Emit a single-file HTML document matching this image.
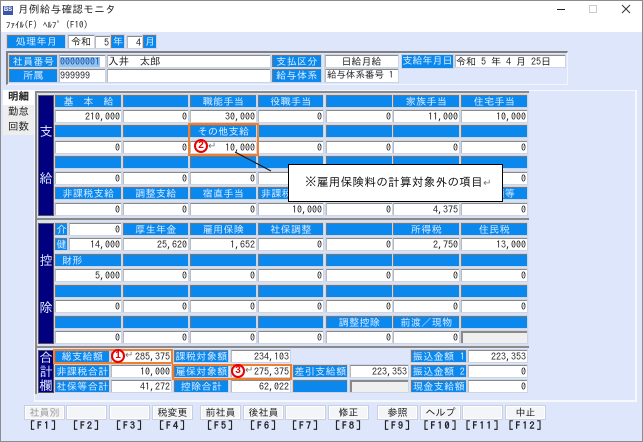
<!DOCTYPE html>
<html lang="ja"><head><meta charset="utf-8"><title>月例給与確認モニタ</title>
<style>
html,body{margin:0;padding:0}
body{width:643px;height:442px;position:relative;overflow:hidden;background:#dde6fa;font-family:"Liberation Sans","IPAGothic","Noto Sans CJK JP",sans-serif;font-size:10px;color:#222;filter:blur(.3px)}
div{position:absolute;box-sizing:border-box;white-space:nowrap}
.j{font-family:"IPAGothic","Noto Sans CJK JP",sans-serif}
.h,.l{background:#0a88ee;color:#dcebff;text-align:center;font-family:"IPAGothic","Noto Sans CJK JP",sans-serif;font-size:10px;line-height:12px;letter-spacing:.4px;border-top:1px solid #777;border-left:1px solid #777;box-shadow:0 0 0 1px #cdd4e4}
.v,.t{background:#fff;color:#222;text-align:right;font-family:"IPAGothic","Noto Sans CJK JP",sans-serif;font-size:10px;line-height:12px;padding-right:1px;border-top:1px solid #8a8a8a;border-left:1px solid #bbb;box-shadow:0 0 0 1px #cdd4e4}
.c1{left:55px;width:66px}.c2{left:123px;width:65px}.c3{left:190px;width:66px}.c4{left:258px;width:65px}.c5{left:326px;width:66px}.c6{left:393px;width:66px}.c7{left:461px;width:66px}
.a1{top:95px;height:12px}.b1{top:110px;height:12px}
.a2{top:125px;height:12px}.b2{top:141px;height:12px}
.a3{top:156px;height:12px}.b3{top:172px;height:12px}
.a4{top:187px;height:12px}.b4{top:203px;height:12px}
.a5{top:223px;height:12px}.b5{top:238px;height:12px}
.a6{top:254px;height:12px}.b6{top:269px;height:12px}
.a7{top:285px;height:12px}.b7{top:300px;height:12px}
.a8{top:316px;height:12px}.b8{top:331px;height:12px}
.bar{background:#000080;color:#dfe8ff;font-family:"IPAGothic","Noto Sans CJK JP",sans-serif;font-size:13px;text-align:center;left:38px;width:16px;border:1px solid #555}
.btn{top:405px;height:15px;width:41px;background:#f4f5f8;border:1px solid #c9cfdc;box-shadow:inset 0 0 0 1px #fff;text-align:center;font-family:"IPAGothic","Noto Sans CJK JP",sans-serif;font-size:10px;line-height:14px;color:#222}
.fk{top:420px;width:44px;text-align:center;font-family:"IPAGothic","Noto Sans CJK JP",sans-serif;font-size:10px;line-height:12px;letter-spacing:2px;color:#222;font-weight:bold}
.box{border:2px solid #f08030;background:transparent}
.cir{width:14px;height:14px;border-radius:50%;border:2px solid #e80000;background:#fff;color:#e80000;font:bold 10px/10px "Liberation Sans",sans-serif;text-align:center}
.ret{color:#777;font-family:"DejaVu Sans",sans-serif;font-size:10px;line-height:12px;background:transparent}
.tab{left:3px;width:31px;height:15px;font-family:"IPAGothic","Noto Sans CJK JP",sans-serif;font-size:10.5px;line-height:14px;text-align:center;background:#eeeeee}
</style></head><body>

<!-- window chrome -->
<div style="left:0;top:0;width:643px;height:442px;border:1px solid #8c8c8c;z-index:50"></div>
<div style="left:1px;top:1px;width:641px;height:31px;background:#fff"></div>
<div style="left:3px;top:6px;width:10px;height:9px;background:#3b55a8;color:#fff;font:bold 6px/9px 'Liberation Sans',sans-serif;text-align:center">BS</div>
<div class="j" style="left:18px;top:3px;font-size:10.5px;line-height:14px;letter-spacing:.4px;color:#222">月例給与確認モニタ</div>
<div class="j" style="left:6px;top:20px;font-size:9px;line-height:12px;color:#222">ﾌｧｲﾙ(F)</div>
<div class="j" style="left:43px;top:20px;font-size:9px;line-height:12px;color:#222">ﾍﾙﾌﾟ (F10)</div>
<div style="left:557px;top:9px;width:8px;height:1px;background:#222"></div>
<div style="left:589px;top:5px;width:8px;height:8px;border:1px solid #ccc"></div>
<svg style="position:absolute;left:621px;top:4px" width="10" height="10"><path d="M1 1L9 9M9 1L1 9" stroke="#333" stroke-width="1" fill="none"/></svg>

<!-- year month -->
<div class="l" style="left:7px;top:35px;width:58px;height:13px">処理年月</div>
<div class="t" style="left:68px;top:35px;width:26px;height:13px;text-align:center">令和</div>
<div class="t" style="left:95px;top:36px;width:15px;height:12px">5</div>
<div class="l" style="left:111px;top:35px;width:13px;height:13px;letter-spacing:0">年</div>
<div class="t" style="left:127px;top:36px;width:15px;height:12px">4</div>
<div class="l" style="left:143px;top:35px;width:13px;height:13px;letter-spacing:0">月</div>

<!-- employee panel -->
<div style="left:6px;top:51px;width:562px;height:34px;border-top:2px solid #808080;border-left:2px solid #808080;border-bottom:1px solid #f2f5fc;border-right:1px solid #f2f5fc"></div>
<div class="l" style="left:9px;top:55px;width:48px;height:12px">社員番号</div>
<div class="t" style="left:59px;top:55px;width:46px;height:12px;text-align:left;padding-left:0"><span style="background:#8fc4f2;color:#1a4f9e">00000001</span></div>
<div class="t" style="left:107px;top:55px;width:163px;height:12px;text-align:left;padding-left:0;font-size:10.5px">入井　太郎</div>
<div class="l" style="left:272px;top:55px;width:49px;height:12px">支払区分</div>
<div class="t" style="left:325px;top:55px;width:73px;height:12px;text-align:center">日給月給</div>
<div class="l" style="left:402px;top:55px;width:51px;height:13px;border:0;letter-spacing:0">支給年月日</div>
<div class="t" style="left:455px;top:55px;width:110px;height:12px;text-align:left;padding-left:0">令和 5 年 4 月 25日</div>
<div class="l" style="left:9px;top:69px;width:48px;height:13px">所属</div>
<div class="t" style="left:59px;top:69px;width:46px;height:13px;text-align:left;padding-left:0">999999</div>
<div class="t" style="left:107px;top:69px;width:163px;height:13px"></div>
<div class="l" style="left:272px;top:69px;width:49px;height:13px">給与体系</div>
<div class="t" style="left:325px;top:69px;width:73px;height:13px;text-align:left;padding:0 0 0 1px;font-size:9.5px">給与体系番号 1</div>

<!-- tabs -->
<div class="tab" style="top:90px;background:#fff;font-weight:bold">明細</div>
<div class="tab" style="top:105px">勤怠</div>
<div class="tab" style="top:120px">回数</div>

<!-- main panel -->
<div style="left:34px;top:90px;width:603px;height:312px;border:1px solid #f6f8fe;border-right:2px solid #f6f8fe;border-bottom:2px solid #f6f8fe;background:#dde6fa"></div>
<div style="left:35px;top:91px;width:494px;height:257px;background:#d9e0f1"></div>
<div style="left:35px;top:91px;width:494px;height:2px;background:#8a8a8a"></div>
<div style="left:35px;top:91px;width:2px;height:127px;background:#8a8a8a"></div>
<div style="left:35px;top:218px;width:494px;height:2px;background:#8a8a8a"></div>
<div style="left:35px;top:220px;width:2px;height:126px;background:#8a8a8a"></div>
<div style="left:35px;top:346px;width:494px;height:2px;background:#8a8a8a"></div>
<div style="left:35px;top:348px;width:2px;height:46px;background:#8a8a8a"></div>

<div class="bar" style="top:95px;height:121px"><div style="left:0;width:14px;top:29px">支</div><div style="left:0;width:14px;top:76px">給</div></div>
<div class="bar" style="top:223px;height:121px"><div style="left:0;width:14px;top:30px">控</div><div style="left:0;width:14px;top:77px">除</div></div>
<div class="bar" style="top:350px;height:43px;line-height:14px"><div style="left:0;width:14px;top:0">合</div><div style="left:0;width:14px;top:14px">計</div><div style="left:0;width:14px;top:28px">欄</div></div>

<!-- 支給 -->
<div class="h c1 a1" style="letter-spacing:0">基　本　給</div><div class="h c2 a1"></div><div class="h c3 a1">職能手当</div><div class="h c4 a1">役職手当</div><div class="h c5 a1"></div><div class="h c6 a1">家族手当</div><div class="h c7 a1">住宅手当</div>
<div class="v c1 b1">210,000</div><div class="v c2 b1">0</div><div class="v c3 b1">30,000</div><div class="v c4 b1">0</div><div class="v c5 b1">0</div><div class="v c6 b1">11,000</div><div class="v c7 b1">10,000</div>
<div class="h c1 a2"></div><div class="h c2 a2"></div><div class="h c3 a2">その他支給</div><div class="h c4 a2"></div><div class="h c5 a2"></div><div class="h c6 a2"></div><div class="h c7 a2"></div>
<div class="v c1 b2">0</div><div class="v c2 b2">0</div><div class="v c3 b2">10,000</div><div class="v c4 b2">0</div><div class="v c5 b2">0</div><div class="v c6 b2">0</div><div class="v c7 b2">0</div>
<div class="h c1 a3"></div><div class="h c2 a3"></div><div class="h c3 a3"></div><div class="h c4 a3"></div><div class="h c5 a3"></div><div class="h c6 a3"></div><div class="h c7 a3"></div>
<div class="v c1 b3">0</div><div class="v c2 b3">0</div><div class="v c3 b3">0</div><div class="v c4 b3">0</div><div class="v c5 b3">0</div><div class="v c6 b3">0</div><div class="v c7 b3">0</div>
<div class="h c1 a4">非課税支給</div><div class="h c2 a4">調整支給</div><div class="h c3 a4">宿直手当</div><div class="h c4 a4" style="text-align:left;padding-left:2px">非課税通勤</div><div class="h c5 a4"></div><div class="h c6 a4"></div><div class="h c7 a4">前月額等</div>
<div class="v c1 b4">0</div><div class="v c2 b4">0</div><div class="v c3 b4">0</div><div class="v c4 b4">10,000</div><div class="v c5 b4">0</div><div class="v c6 b4">4,375</div><div class="v c7 b4">0</div>

<!-- 控除 -->
<div class="h a5" style="left:55px;width:12px;letter-spacing:0">介</div><div class="v b5" style="top:223px;left:69px;width:52px">0</div><div class="h c2 a5">厚生年金</div><div class="h c3 a5">雇用保険</div><div class="h c4 a5">社保調整</div><div class="h c5 a5"></div><div class="h c6 a5">所得税</div><div class="h c7 a5">住民税</div>
<div class="h b5" style="left:55px;width:12px;letter-spacing:0">健</div><div class="v b5" style="left:69px;width:52px">14,000</div><div class="v c2 b5">25,620</div><div class="v c3 b5">1,652</div><div class="v c4 b5">0</div><div class="v c5 b5">0</div><div class="v c6 b5">2,750</div><div class="v c7 b5">13,000</div>
<div class="h c1 a6" style="text-align:left;padding-left:6px">財形</div><div class="h c2 a6"></div><div class="h c3 a6"></div><div class="h c4 a6"></div><div class="h c5 a6"></div><div class="h c6 a6"></div><div class="h c7 a6"></div>
<div class="v c1 b6">5,000</div><div class="v c2 b6">0</div><div class="v c3 b6">0</div><div class="v c4 b6">0</div><div class="v c5 b6">0</div><div class="v c6 b6">0</div><div class="v c7 b6">0</div>
<div class="h c1 a7"></div><div class="h c2 a7"></div><div class="h c3 a7"></div><div class="h c4 a7"></div><div class="h c5 a7"></div><div class="h c6 a7"></div><div class="h c7 a7"></div>
<div class="v c1 b7">0</div><div class="v c2 b7">0</div><div class="v c3 b7">0</div><div class="v c4 b7">0</div><div class="v c5 b7">0</div><div class="v c6 b7">0</div><div class="v c7 b7">0</div>
<div class="h c1 a8"></div><div class="h c2 a8"></div><div class="h c3 a8"></div><div class="h c4 a8"></div><div class="h c5 a8">調整控除</div><div class="h c6 a8">前渡／現物</div><div class="h c7 a8"></div>
<div class="v c1 b8">0</div><div class="v c2 b8">0</div><div class="v c3 b8">0</div><div class="v c4 b8">0</div><div class="v c5 b8">0</div><div class="v c6 b8">0</div><div class="v c7 b8" style="background:#efefef;border-top:2px solid #8a8a8a;border-left:2px solid #8a8a8a"></div>

<!-- 合計 -->
<div class="h" style="left:55px;top:350px;width:54px;height:12px">総支給額</div>
<div class="v" style="left:111px;top:350px;width:60px;height:12px">285,375</div>
<div class="h" style="left:174px;top:350px;width:54px;height:12px">課税対象額</div>
<div class="v" style="left:231px;top:350px;width:59px;height:12px">234,103</div>
<div class="h" style="left:411px;top:350px;width:55px;height:12px">振込金額 1</div>
<div class="v" style="left:468px;top:350px;width:59px;height:12px">223,353</div>

<div class="h" style="left:55px;top:365px;width:54px;height:12px">非課税合計</div>
<div class="v" style="left:111px;top:365px;width:60px;height:12px">10,000</div>
<div class="h" style="left:174px;top:365px;width:54px;height:12px">雇保対象額</div>
<div class="v" style="left:231px;top:365px;width:59px;height:12px">275,375</div>
<div class="h" style="left:293px;top:365px;width:54px;height:12px">差引支給額</div>
<div class="v" style="left:350px;top:365px;width:58px;height:12px">223,353</div>
<div class="h" style="left:411px;top:365px;width:55px;height:12px">振込金額 2</div>
<div class="v" style="left:468px;top:365px;width:59px;height:12px">0</div>

<div class="h" style="left:55px;top:380px;width:54px;height:12px">社保等合計</div>
<div class="v" style="left:111px;top:380px;width:60px;height:12px">41,272</div>
<div class="h" style="left:174px;top:380px;width:54px;height:12px">控除合計</div>
<div class="v" style="left:231px;top:380px;width:59px;height:12px">62,022</div>
<div class="h" style="left:293px;top:380px;width:54px;height:12px"></div>
<div class="v" style="left:350px;top:380px;width:58px;height:12px;background:#efefef;border-top:2px solid #8a8a8a;border-left:2px solid #8a8a8a"></div>
<div class="h" style="left:411px;top:380px;width:55px;height:12px">現金支給額</div>
<div class="v" style="left:468px;top:380px;width:59px;height:12px">0</div>

<!-- annotations -->
<div class="box" style="left:188px;top:123px;width:71px;height:33px"></div>
<div class="box" style="left:53px;top:349px;width:120px;height:15px"></div>
<div class="box" style="left:172px;top:364px;width:120px;height:16px"></div>
<div class="cir" style="left:194px;top:139px">2</div>
<div class="ret" style="left:208px;top:141px">↵</div>
<div class="cir" style="left:111px;top:349px">1</div>
<div class="ret" style="left:125px;top:350px">↵</div>
<div class="cir" style="left:231px;top:364px">3</div>
<div class="ret" style="left:245px;top:365px">↵</div>
<svg style="position:absolute;left:230px;top:148px" width="60" height="30"><path d="M5 4L41 23" stroke="#111" stroke-width="1" fill="none"/></svg>
<div class="j" style="left:288px;top:164px;width:215px;height:38px;background:#fff;border:1px solid #000;font-size:11.5px;line-height:36px;padding-left:16px;color:#111;letter-spacing:.37px">※雇用保険料の計算対象外の項目<span style="color:#777;font-family:'DejaVu Sans',sans-serif;font-size:10px">↵</span></div>

<!-- buttons -->
<div class="btn" style="left:24px;color:#999">社員別</div>
<div class="btn" style="left:66px"></div>
<div class="btn" style="left:109px"></div>
<div class="btn" style="left:152px">税変更</div>
<div class="btn" style="left:200px">前社員</div>
<div class="btn" style="left:243px">後社員</div>
<div class="btn" style="left:285px"></div>
<div class="btn" style="left:328px">修正</div>
<div class="btn" style="left:377px">参照</div>
<div class="btn" style="left:420px">ヘルプ</div>
<div class="btn" style="left:462px"></div>
<div class="btn" style="left:505px">中止</div>
<div class="fk" style="left:22px">[F1]</div>
<div class="fk" style="left:65px">[F2]</div>
<div class="fk" style="left:108px">[F3]</div>
<div class="fk" style="left:151px">[F4]</div>
<div class="fk" style="left:199px">[F5]</div>
<div class="fk" style="left:242px">[F6]</div>
<div class="fk" style="left:284px">[F7]</div>
<div class="fk" style="left:327px">[F8]</div>
<div class="fk" style="left:376px">[F9]</div>
<div class="fk" style="left:419px">[F10]</div>
<div class="fk" style="left:461px">[F11]</div>
<div class="fk" style="left:504px">[F12]</div>
</body></html>
